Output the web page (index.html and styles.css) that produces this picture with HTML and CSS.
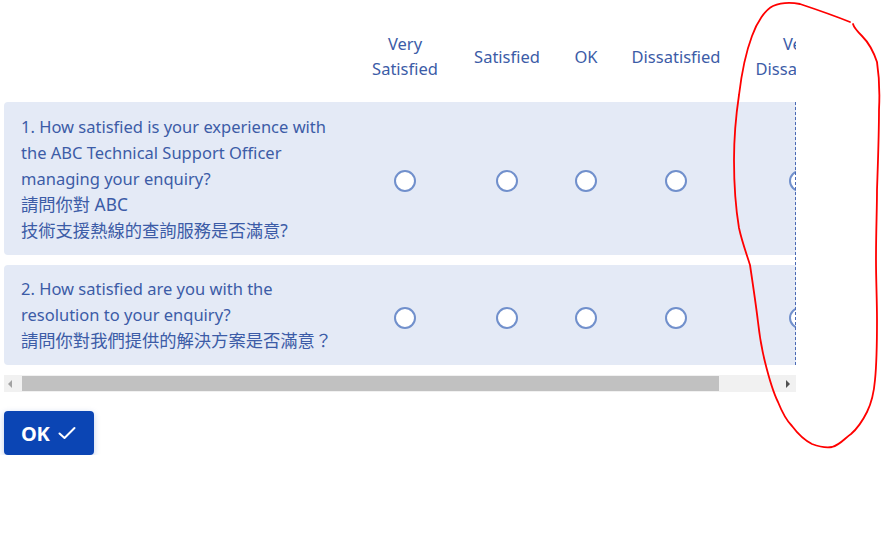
FILE: index.html
```html
<!DOCTYPE html>
<html lang="en">
<head>
<meta charset="utf-8">
<title>Survey</title>
<link rel="stylesheet" href="styles.css">
</head>
<body>
<div class="page">
  <div class="scroller">
    <div class="table">
      <div class="grid head">
        <div></div>
        <div class="h">Very<br>Satisfied</div>
        <div class="h">Satisfied</div>
        <div class="h">OK</div>
        <div class="h">Dissatisfied</div>
        <div class="h">Very<br>Dissatisfied</div>
      </div>
      <div class="grid row">
        <div class="q">
          <span class="ln">1. How satisfied is your experience with</span>
          <span class="ln">the ABC Technical Support Officer</span>
          <span class="ln">managing your enquiry?</span>
          <span class="ln zh">請問你對 ABC</span>
          <span class="ln zh">技術支援熱線的查詢服務是否滿意?</span>
        </div>
        <div class="cell"><span class="radio"></span></div>
        <div class="cell"><span class="radio"></span></div>
        <div class="cell"><span class="radio"></span></div>
        <div class="cell"><span class="radio"></span></div>
        <div class="cell"><span class="radio"></span></div>
      </div>
      <div class="grid row">
        <div class="q">
          <span class="ln">2. How satisfied are you with the</span>
          <span class="ln">resolution to your enquiry?</span>
          <span class="ln zh">請問你對我們提供的解決方案是否滿意？</span>
        </div>
        <div class="cell"><span class="radio"></span></div>
        <div class="cell"><span class="radio"></span></div>
        <div class="cell"><span class="radio"></span></div>
        <div class="cell"><span class="radio"></span></div>
        <div class="cell"><span class="radio"></span></div>
      </div>
    </div>
  </div>
  <div class="scrollbar">
    <span class="arrow left"></span>
    <div class="track"><div class="thumb"></div></div>
    <span class="arrow right"></span>
  </div>
  <button class="ok" type="button">OK
    <svg class="check" width="18" height="14" viewBox="0 0 18 14"><path d="M1.5 7.5 L6.5 12 L16.5 2" fill="none" stroke="#fff" stroke-width="2" stroke-linecap="round" stroke-linejoin="round"/></svg>
  </button>
</div>
<svg class="scribble" width="891" height="538" viewBox="0 0 891 538">
  <path d="M850 22 C835 16 815 9 800 4 C790 2 780 3 773 6 C765 10 757 22 752 36 C746 52 742 70 739 95 C736 115 734 135 734 160 C734 185 736 210 739 228 C742 242 747 255 750 265 C753 285 756 305 758 322 C760 340 762 350 765 362 C769 378 773 392 778 402 C782 412 786 420 792 426 C798 434 804 440 812 444 C820 447 826 448 832 447 C840 445 845 438 851 434 C858 428 863 420 867 412 C872 402 874 392 875 380 C877 360 877 340 877 320 C877 300 876 280 876 260 C876 230 877 210 877 190 C878 160 879 135 879 110 C880 90 879 75 877 62 C873 50 868 42 862 36 C858 32 854 28 853 24" fill="none" stroke="#f00" stroke-width="1.8" stroke-linecap="round"/>
</svg>
</body>
</html>
```

FILE: styles.css
```css
html, body {
  margin: 0;
  padding: 0;
  background: #fff;
}
body {
  font-family: "Noto Sans", "Noto Sans CJK TC", sans-serif;
  color: #3c5ca7;
}
.page {
  padding: 0 4px;
  width: 792px;
}
.scroller {
  position: relative;
  width: 792px;
  overflow: hidden;
}
.scroller::after {
  content: "";
  position: absolute;
  right: 0;
  top: 102px;
  width: 1px;
  height: 263px;
  background: repeating-linear-gradient(to bottom, #4a6ab5 0 3px, transparent 3px 5px);
}
.table {
  width: 868px;
}
.grid {
  display: grid;
  grid-template-columns: 350px 102px 102px 56px 124px 124px;
}
.head {
  padding: 31px 0 21px;
  align-items: center;
  font-size: 16.5px;
  line-height: 25px;
}
.h {
  text-align: center;
  white-space: nowrap;
}
.row {
  background: #e4eaf6;
  border-radius: 4px;
  margin-bottom: 10px;
  align-items: center;
}
.q {
  padding: 12px 0 11px 17px;
  font-size: 16.5px;
  line-height: 26px;
}
.row + .row .q {
  padding-top: 11px;
}
.ln {
  display: block;
  white-space: nowrap;
}
.zh {
  font-size: 17.3px;
}
.cell {
  display: flex;
  justify-content: center;
  padding-top: 5px;
}
.radio {
  width: 22px;
  height: 22px;
  box-sizing: border-box;
  border: 2px solid #7190cc;
  border-radius: 50%;
  background: #fff;
}
.scrollbar {
  display: flex;
  align-items: center;
  height: 17px;
  background: #f1f1f1;
}
.arrow {
  width: 0;
  height: 0;
  border-top: 4px solid transparent;
  border-bottom: 4px solid transparent;
}
.arrow.left {
  margin: 0 5px 0 4px;
  border-right: 4px solid #a3a3a3;
}
.arrow.right {
  margin: 0 6px 0 4px;
  border-left: 4px solid #505050;
}
.track {
  flex: 1;
  height: 15px;
  display: flex;
}
.thumb {
  width: 697px;
  margin-left: 5px;
  height: 15px;
  background: #c1c1c1;
}
.ok {
  margin-top: 19px;
  display: flex;
  align-items: center;
  gap: 8px;
  height: 44px;
  width: 90px;
  padding: 0 0 0 17px;
  border: none;
  border-radius: 4px;
  background: #0b45b4;
  color: #fff;
  font-family: "Noto Sans", sans-serif;
  font-weight: 700;
  font-size: 20px;
  letter-spacing: -0.3px;
  box-shadow: 0 2px 6px rgba(11, 69, 180, 0.25);
}
.check {
  display: block;
}
.scribble {
  position: absolute;
  left: 0;
  top: 0;
  pointer-events: none;
}
```
